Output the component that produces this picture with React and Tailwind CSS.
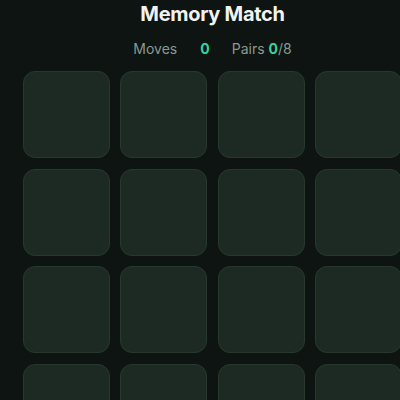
const cards = Array.from({ length: 16 }, (_, i) => i);

const App = () => {
    return (
        <div className="min-h-screen bg-[#0e1412] font-['Inter',sans-serif]">
            <div className="w-[425px] px-[23px] pt-[2px] flex flex-col items-center">
                <h1 className="text-[20px] leading-[24px] font-bold text-[#f1f3f1] tracking-[-0.3px]">Memory Match</h1>
                <div className="mt-[13px] flex items-center text-[14px] leading-[20px] text-[#8b9891]">
                    <span>Moves</span>
                    <span className="ml-[23px] font-bold text-[#34d399]">0</span>
                    <span className="ml-[22px]">Pairs <span className="font-bold text-[#34d399]">0</span>/8</span>
                </div>
                <div className="mt-[12px] grid grid-cols-4 gap-x-[10.5px] gap-y-[10.5px] w-full">
                    {cards.map((c) => (
                        <div
                            key={c}
                            className="h-[87px] rounded-[12px] bg-[#1d2a24] border border-[#29382f]"
                        />
                    ))}
                </div>
            </div>
        </div>
    );
};

export default App;
